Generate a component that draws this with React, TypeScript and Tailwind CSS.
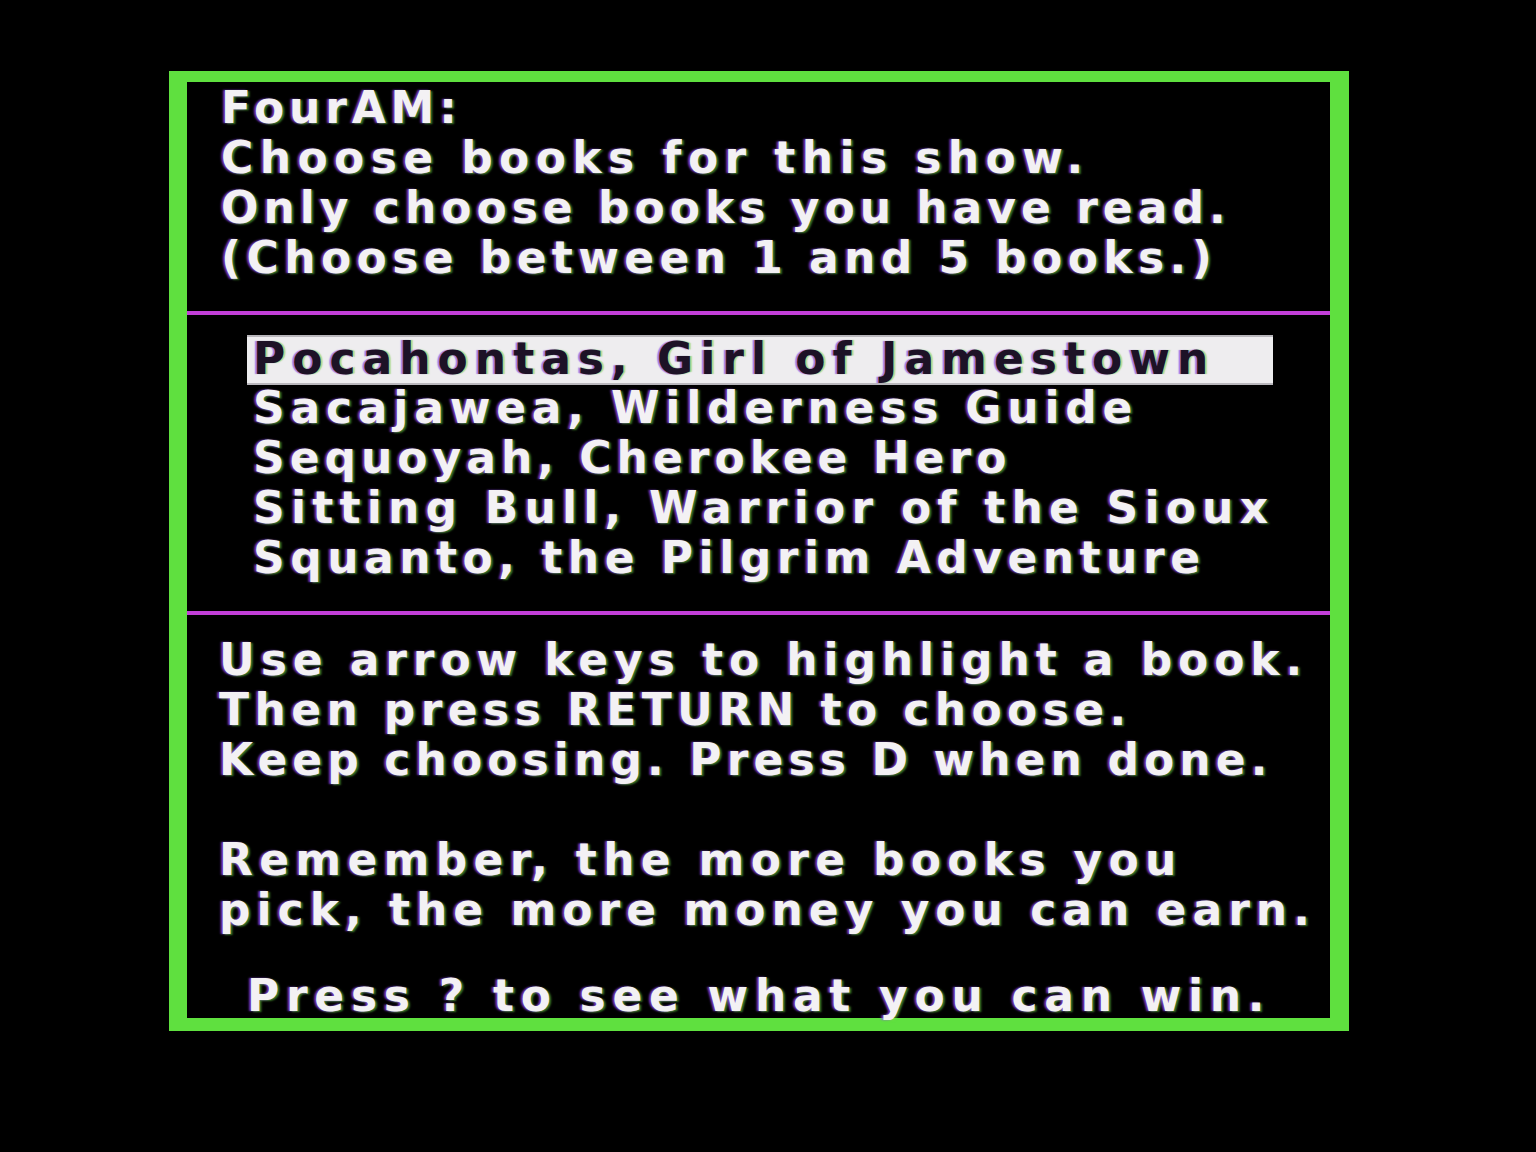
import React from "react";

// Apple II style hi-res text screen: "FourAM" book picker

const glow =
  "[text-shadow:-2px_0_2px_rgba(150,70,255,0.75),2px_1px_2px_rgba(110,220,70,0.55)]";

const header = [
  { t: "FourAM:", c: "tracking-[4.8px]" },
  { t: "Choose books for this show.", c: "tracking-[6.4px]" },
  { t: "Only choose books you have read.", c: "tracking-[5px]" },
  { t: "(Choose between 1 and 5 books.)", c: "tracking-[5.4px]" },
];

const books = [
  { t: "Pocahontas, Girl of Jamestown", c: "tracking-[7px]" },
  { t: "Sacajawea, Wilderness Guide", c: "tracking-[5.8px]" },
  { t: "Sequoyah, Cherokee Hero", c: "tracking-[5px]" },
  { t: "Sitting Bull, Warrior of the Sioux", c: "tracking-[6.2px]" },
  { t: "Squanto, the Pilgrim Adventure", c: "tracking-[5.5px]" },
];

const help = [
  { t: "Use arrow keys to highlight a book.", c: "tracking-[5.9px]" },
  { t: "Then press RETURN to choose.", c: "tracking-[5.4px]" },
  { t: "Keep choosing. Press D when done.", c: "tracking-[5.1px]" },
  { t: "", c: "" },
  { t: "Remember, the more books you", c: "tracking-[6.3px]" },
  { t: "pick, the more money you can earn.", c: "tracking-[6px]" },
];

function Rule() {
  return <div className="h-[4px] bg-[#c23fd8]" />;
}

export default function App() {
  return (
    <div className="min-h-[1152px] w-full bg-black pt-[71px] pl-[169px] font-['DejaVu_Sans',sans-serif] font-bold text-[44px] leading-[50px] text-[#f3f1f4]">
      <div className="w-[1180px] h-[960px] border-solid border-[#5fe03f] border-l-[18px] border-r-[19px] border-t-[11px] border-b-[13px] bg-black">
        {/* Title + instructions */}
        <div className={`pt-[1px] pl-[34px] ${glow}`}>
          {header.map((l) => (
            <div key={l.t} className={`h-[50px] whitespace-pre ${l.c}`}>
              {l.t}
            </div>
          ))}
        </div>

        <div className="mt-[28px]">
          <Rule />
        </div>

        {/* Book list */}
        <div className="mt-[20px] pl-[60px]">
          {books.map((b, i) =>
            i === 0 ? (
              <div
                key={b.t}
                className={`h-[50px] w-[1026px] whitespace-pre pl-[6px] bg-[#eeedef] text-[#1d1226] border-y-2 border-[#b9b7bc] leading-[44px] [text-shadow:-2px_0_1px_rgba(120,40,220,0.6),2px_0_1px_rgba(110,200,60,0.5)] ${b.c}`}
              >
                {b.t}
              </div>
            ) : (
              <div key={b.t} className={`h-[50px] leading-[46px] whitespace-pre pl-[6px] ${glow} ${b.c}`}>
                {b.t}
              </div>
            )
          )}
        </div>

        <div className="mt-[26px]">
          <Rule />
        </div>

        {/* Help text */}
        <div className={`mt-[20px] pl-[32px] ${glow}`}>
          {help.map((l, i) => (
            <div key={i} className={`h-[50px] whitespace-pre ${l.c}`}>
              {l.t}
            </div>
          ))}
          <div className="mt-[36px] pl-[28px] h-[50px] whitespace-pre tracking-[6.7px]">
            Press ? to see what you can win.
          </div>
        </div>
      </div>
    </div>
  );
}
